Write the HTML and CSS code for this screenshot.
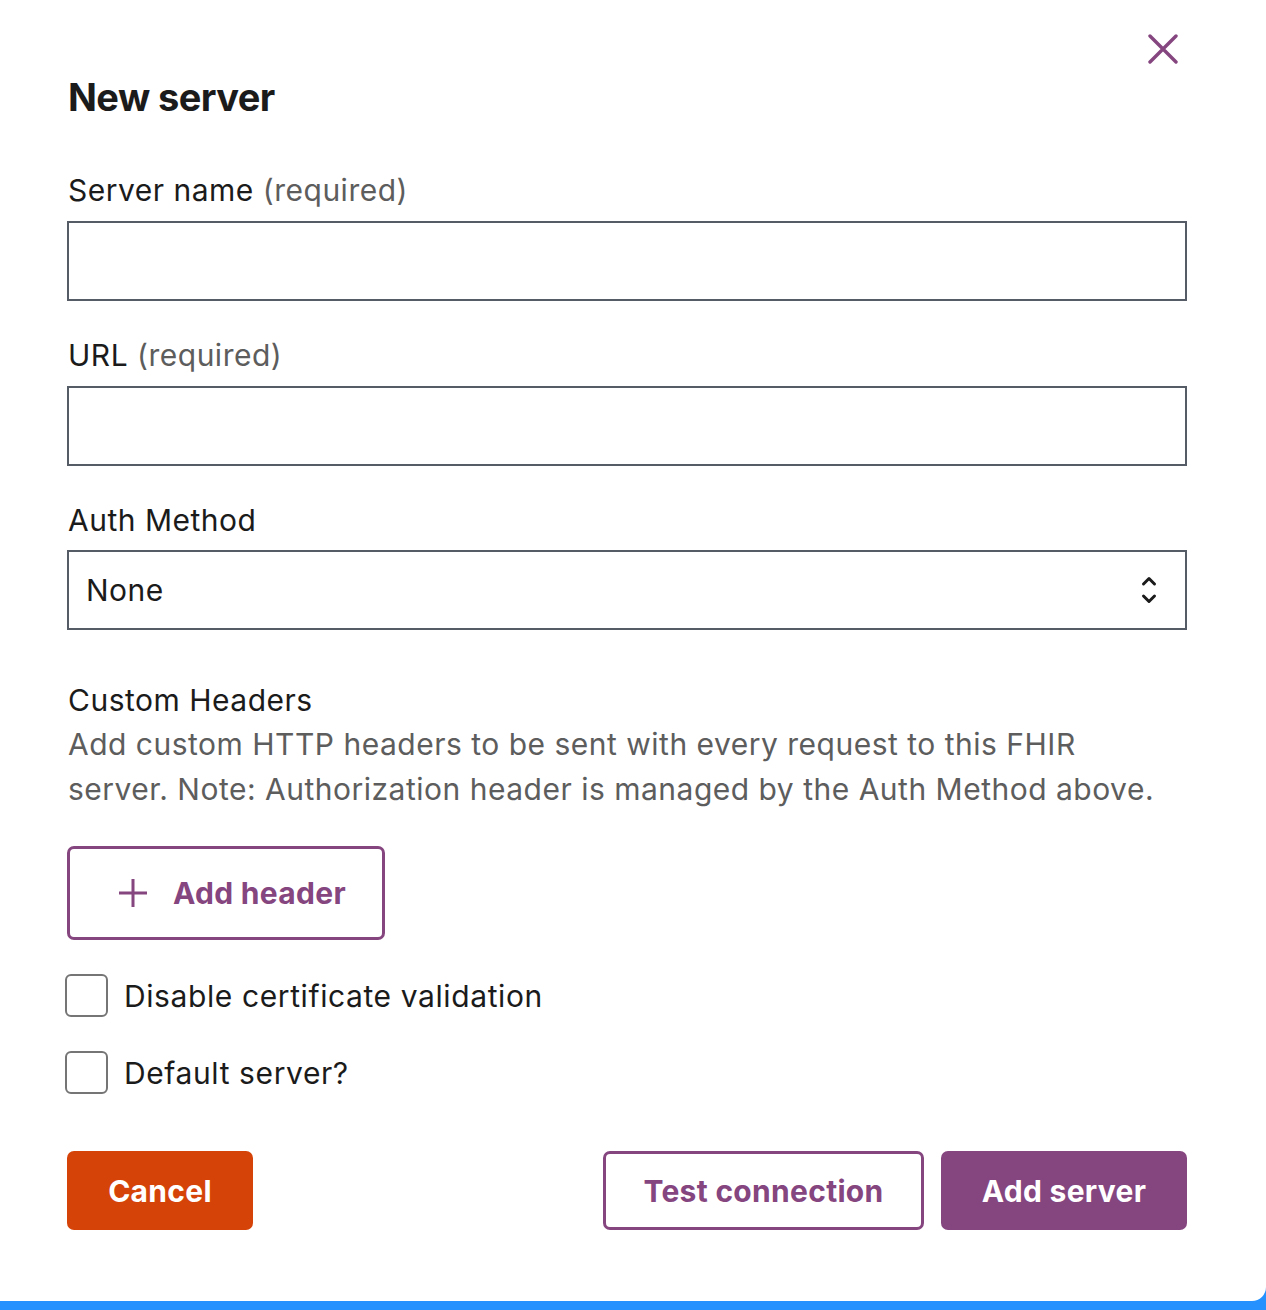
FILE: index.html
```html
<!DOCTYPE html>
<html lang="en">
<head>
<meta charset="utf-8">
<title>New server</title>
<link rel="stylesheet" href="styles.css">
</head>
<body>
<div class="modal">
  <button class="close" aria-label="Close">
    <svg width="30" height="30" viewBox="0 0 30 30"><path d="M2 2 L28 28 M28 2 L2 28" stroke="#85457f" stroke-width="3.4" stroke-linecap="round" fill="none"/></svg>
  </button>
  <h2 class="title">New server</h2>
  <form class="form">
    <label class="label">Server name <span class="hint">(required)</span></label>
    <input class="input" type="text">
    <label class="label label-gap">URL <span class="hint">(required)</span></label>
    <input class="input" type="text">
    <label class="label label-gap">Auth Method</label>
    <div class="select">
      <span>None</span>
      <svg class="chev" width="18" height="32" viewBox="0 0 18 32"><path d="M3.5 10 L9 4.5 L14.5 10 M3.5 22 L9 27.5 L14.5 22" stroke="#1b1b1b" stroke-width="3" fill="none" stroke-linecap="round" stroke-linejoin="round"/></svg>
    </div>
    <div class="headers">
      <div class="label">Custom Headers</div>
      <p class="desc">Add custom HTTP headers to be sent with every request to this FHIR server. Note: Authorization header is managed by the Auth Method above.</p>
    </div>
    <button type="button" class="btn-outline add-header">
      <svg width="30" height="30" viewBox="0 0 30 30"><path d="M15 1 V29 M1 15 H29" stroke="#85457f" stroke-width="3" fill="none"/></svg>
      <span>Add header</span>
    </button>
    <label class="check"><span class="box"></span>Disable certificate validation</label>
    <label class="check check2"><span class="box"></span>Default server?</label>
    <div class="actions">
      <button type="button" class="btn btn-cancel">Cancel</button>
      <div class="right">
        <button type="button" class="btn btn-outline-sm">Test connection</button>
        <button type="button" class="btn btn-primary">Add server</button>
      </div>
    </div>
  </form>
</div>
</body>
</html>
```
FILE: styles.css
```css
* { box-sizing: border-box; }
html, body { margin: 0; padding: 0; }
body {
  background: #2491ff;
  font-family: "Inter", "Liberation Sans", sans-serif;
  color: #1b1b1b;
  height: 1310px;
  overflow: hidden;
}
.modal {
  position: relative;
  background: #fff;
  width: 1266px;
  height: 1301px;
  border-radius: 0 0 14px 0;
  padding: 73px 79px 0 67px;
}
.close {
  position: absolute;
  top: 34px;
  left: 1148px;
  background: none;
  border: 0;
  padding: 0;
  width: 30px;
  height: 30px;
  display: block;
}
.title {
  margin: 0 0 0 1px;
  font-size: 38px;
  line-height: 48px;
  font-weight: 700;
  letter-spacing: -0.6px;
}
.form { display: flex; flex-direction: column; align-items: flex-start; margin-top: 47px; }
.label {
  display: block;
  font-size: 30px;
  line-height: 44px;
  margin-left: 1px;
  letter-spacing: 0.5px;
}
.label-gap { margin-top: 32px; }
.hint { color: #5d5d5d; }
.input, .select {
  width: 1120px;
  height: 80px;
  border: 2.5px solid #565c65;
  border-radius: 0;
  margin-top: 9px;
  background: #fff;
  font-family: inherit;
}
.select {
  display: flex;
  align-items: center;
  justify-content: space-between;
  padding: 0 27px 0 17px;
  font-size: 30px;
  letter-spacing: 0.5px;
  margin-top: 8px;
}
.chev { display: block; }
.headers { margin-top: 48px; }
.desc {
  margin: 0 0 0 1px;
  font-size: 30px;
  line-height: 45px;
  color: #5d5d5d;
  width: 1110px;
  letter-spacing: 0.5px;
}
.add-header {
  margin-top: 34px;
  width: 318px;
  height: 94px;
  border: 3px solid #85457f;
  border-radius: 7px;
  background: #fff;
  display: flex;
  align-items: center;
  gap: 25px;
  padding: 0 0 0 48px;
  color: #85457f;
  font-family: inherit;
  font-size: 30px;
  font-weight: 700;
  letter-spacing: 0.3px;
}
.add-header svg { display: block; }
.check {
  display: flex;
  align-items: center;
  gap: 16px;
  margin-top: 34px;
  font-size: 30px;
  line-height: 42px;
  letter-spacing: 0.6px;
}
.check2 { margin-top: 34px; }
.box {
  width: 43px;
  height: 43px;
  border: 2px solid #757575;
  border-radius: 6px;
  margin-left: -2px;
  background: #fff;
  flex: none;
}
.actions {
  margin-top: 57px;
  width: 1120px;
  display: flex;
  justify-content: space-between;
}
.right { display: flex; gap: 17px; }
.btn {
  height: 79px;
  border-radius: 7px;
  font-family: inherit;
  font-size: 30px;
  font-weight: 700;
  letter-spacing: 0.3px;
  border: 0;
  padding: 0;
}
.btn-cancel { width: 186px; background: #d54309; color: #fff; }
.btn-outline-sm { width: 321px; background: #fff; color: #85457f; border: 3px solid #85457f; }
.btn-primary { width: 246px; background: #85457f; color: #fff; }
```
